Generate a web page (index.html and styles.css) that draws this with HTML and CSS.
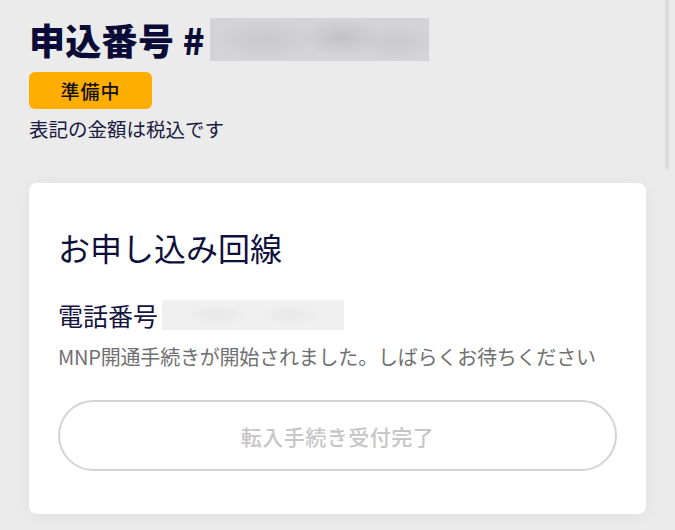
FILE: index.html
```html
<!DOCTYPE html>
<html lang="ja">
<head>
<meta charset="utf-8">
<title>申込詳細</title>
<link rel="stylesheet" href="styles.css">
</head>
<body>
<div class="page">
  <header class="head">
    <h1 class="title">申込番号 #<span class="masked masked-order"></span></h1>
    <span class="badge">準備中</span>
    <p class="note">表記の金額は税込です</p>
  </header>
  <section class="card">
    <h2 class="card-title">お申し込み回線</h2>
    <div class="phone">電話番号<span class="masked masked-phone"></span></div>
    <p class="status">MNP開通手続きが開始されました。しばらくお待ちください</p>
    <button class="btn" type="button" disabled>転入手続き受付完了</button>
  </section>
  <div class="scrollbar"></div>
</div>
</body>
</html>
```
FILE: styles.css
```css
* { box-sizing: border-box; }
html, body { margin: 0; padding: 0; }
body {
  background: #ebebeb;
  font-family: "Noto Sans CJK JP", "Noto Sans", sans-serif;
  color: #10103c;
  width: 675px;
  height: 530px;
  overflow: hidden;
}
.page {
  position: relative;
  padding: 17px 29px 0 29px;
}
.head {
  display: flex;
  flex-direction: column;
  align-items: flex-start;
}
.title {
  margin: 0;
  font-size: 36px;
  line-height: 44px;
  font-weight: 900;
  color: #0b0b38;
  display: flex;
  align-items: center;
  letter-spacing: 0.3px;
}
.masked {
  display: inline-block;
}
.masked-order {
  width: 219px;
  height: 43px;
  margin-left: 5px;
  margin-top: 1px;
  background:
    radial-gradient(ellipse 40px 18px at 60% 45%, #c2c2c4 0%, rgba(194,194,196,0) 100%),
    radial-gradient(ellipse 50px 20px at 25% 50%, #c9c9cb 0%, rgba(201,201,203,0) 100%),
    radial-gradient(ellipse 40px 18px at 85% 55%, #cacacc 0%, rgba(202,202,204,0) 100%),
    #d4d4d6;
  filter: blur(0.5px);
}
.badge {
  margin-top: 11px;
  width: 123px;
  height: 37px;
  line-height: 37px;
  text-align: center;
  background: #ffae00;
  border-radius: 6px;
  color: #111;
  font-size: 19px;
  font-weight: 500;
  letter-spacing: 1px;
}
.note {
  margin: 7px 0 0 0;
  font-size: 19.5px;
  line-height: 26px;
  color: #1a1a42;
}
.card {
  margin-top: 41px;
  background: #fff;
  border-radius: 8px;
  box-shadow: 0 2px 18px rgba(0,0,0,0.05);
  padding: 44px 29px 43px 29px;
}
.card-title {
  margin: 0;
  font-size: 32px;
  line-height: 40px;
  font-weight: 400;
  color: #0f0f3c;
}
.phone {
  margin-top: 31px;
  font-size: 25px;
  line-height: 34px;
  color: #14143e;
  display: flex;
  align-items: center;
}
.masked-phone {
  width: 182px;
  height: 30px;
  margin-left: 4px;
  background:
    radial-gradient(ellipse 30px 10px at 30% 50%, #e6e6e6 0%, rgba(230,230,230,0) 100%),
    radial-gradient(ellipse 30px 10px at 70% 50%, #e8e8e8 0%, rgba(232,232,232,0) 100%),
    #f0f0f0;
}
.status {
  margin: 11px 0 0 0;
  font-size: 20px;
  line-height: 28px;
  color: #707070;
  letter-spacing: -0.2px;
}
.btn {
  display: block;
  margin-top: 29px;
  width: 100%;
  height: 71px;
  border: 2px solid #d3d3d3;
  border-radius: 36px;
  background: #fff;
  font-family: inherit;
  font-size: 21px;
  font-weight: 500;
  color: #c6c6c6;
  letter-spacing: 0.5px;
}
.scrollbar {
  position: absolute;
  top: 0;
  left: 665px;
  width: 4px;
  height: 170px;
  border-radius: 2px;
  background: #dcdcdc;
}
```
